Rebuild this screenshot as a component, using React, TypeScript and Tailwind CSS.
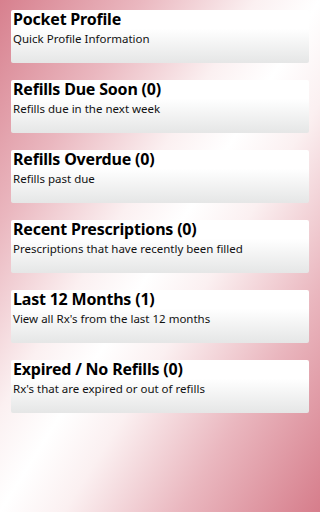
import React from 'react'

const ITEMS = [
  { title: 'Pocket Profile', subtitle: 'Quick Profile Information' },
  { title: 'Refills Due Soon (0)', subtitle: 'Refills due in the next week' },
  { title: 'Refills Overdue (0)', subtitle: 'Refills past due' },
  { title: 'Recent Prescriptions (0)', subtitle: 'Prescriptions that have recently been filled' },
  { title: 'Last 12 Months (1)', subtitle: "View all Rx's from the last 12 months" },
  { title: 'Expired / No Refills (0)', subtitle: "Rx's that are expired or out of refills" },
]

export default function App() {
  return (
    <div
      className="w-full h-screen overflow-hidden bg-[linear-gradient(to_bottom_right,#d7808e_0%,#eab7bf_22%,#fbf0f1_40%,#ffffff_50%,#fbf0f1_60%,#eab7bf_78%,#d67d8b_100%)] pt-[10px] px-[11px] flex flex-col gap-[17px]"
      style={{ fontFamily: '"Noto Sans", "Open Sans", sans-serif' }}
    >
      {ITEMS.map(item => (
        <div
          key={item.title}
          className="h-[53px] shrink-0 rounded-[2px] bg-[linear-gradient(to_bottom,#ffffff_0%,#ffffff_35%,#e5e6e6_100%)] pl-[2px] text-black"
        >
          <div className="text-[16px] leading-[18px] font-bold tracking-[-0.2px]">{item.title}</div>
          <div className="mt-[3px] text-[11.5px] leading-[16px] text-[#111]">{item.subtitle}</div>
        </div>
      ))}
    </div>
  )
}
